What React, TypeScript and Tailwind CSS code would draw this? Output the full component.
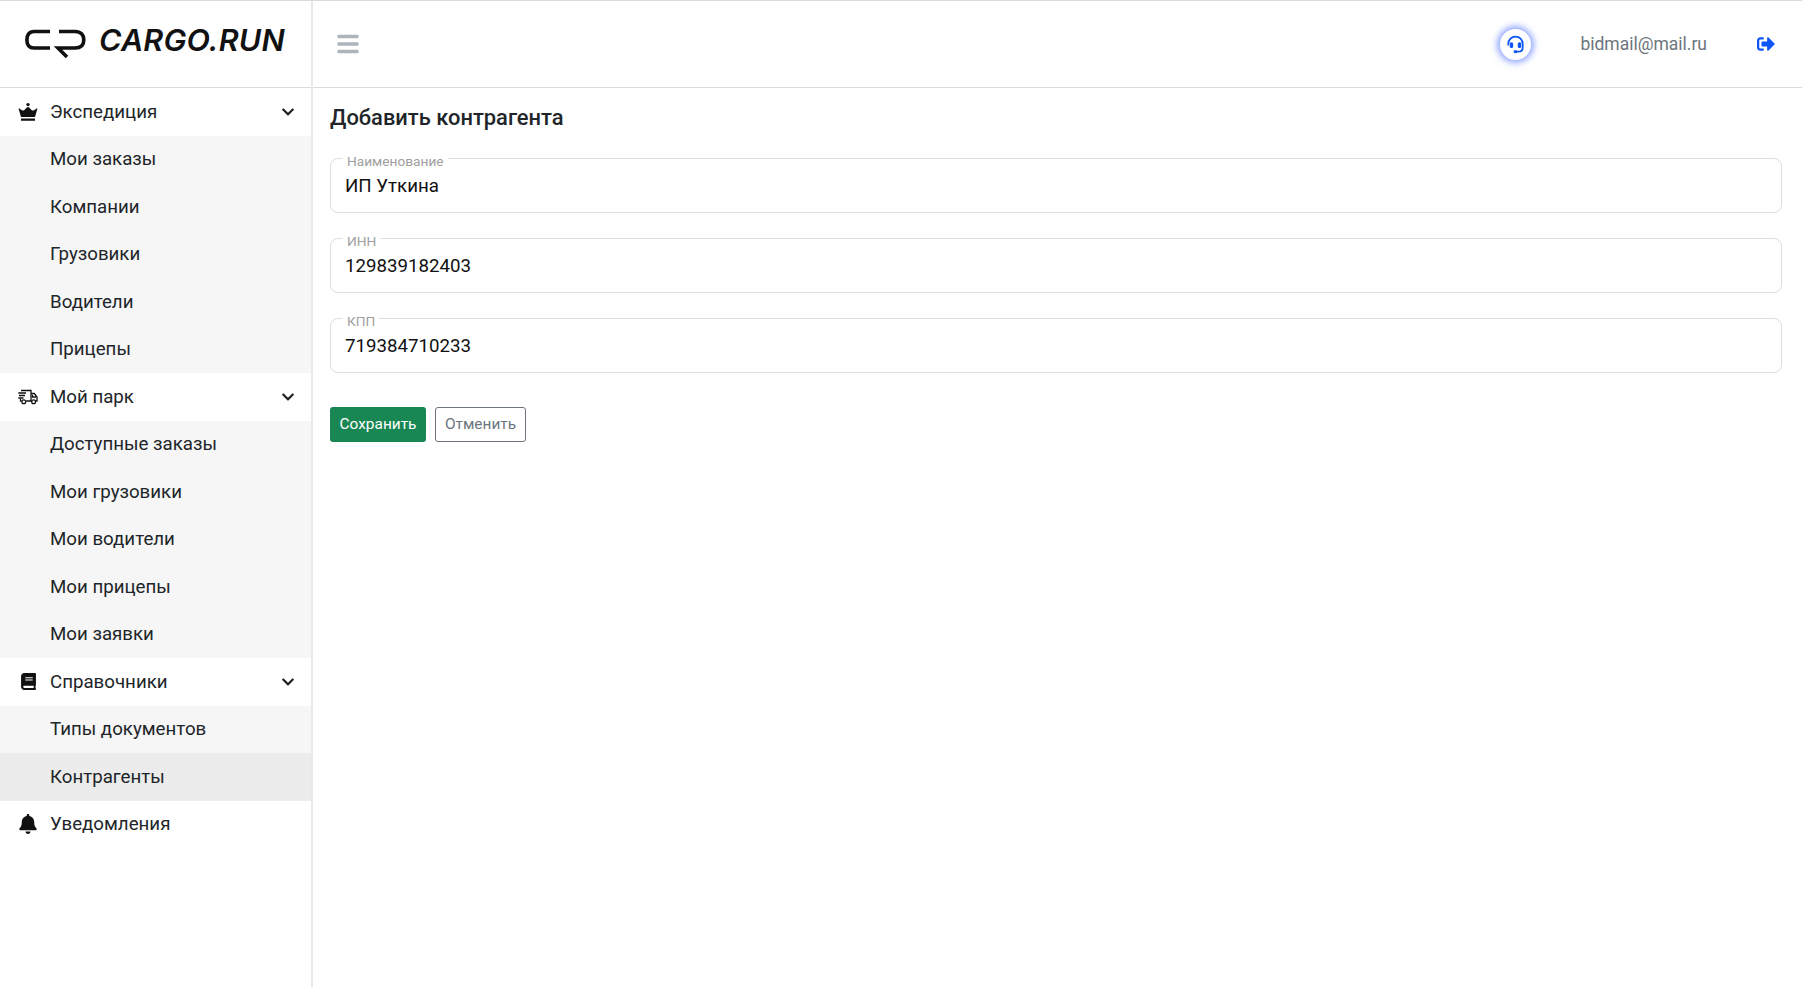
import { FaBars, FaBell, FaBook, FaChevronDown, FaSignOutAlt } from 'react-icons/fa';

const CrownIcon = () => (
    <svg width="20" height="20" viewBox="0 0 20 20" fill="currentColor">
        <circle cx="10" cy="2.6" r="1.7" />
        <path d="M0.5 6.2 C2.2 6 3.2 8.6 5 8.6 C7 8.6 8.2 5 10 5 C11.8 5 13 8.6 15 8.6 C16.8 8.6 17.8 6 19.5 6.2 L17 15 H3 Z" />
        <rect x="3" y="16.4" width="14" height="2.4" rx="0.4" />
    </svg>
);

const TruckIcon = () => (
    <svg width="20" height="16" viewBox="0 0 20 16" fill="none" stroke="currentColor" strokeWidth="1.3">
        <path d="M3 1.5 H13 V12 H8.2 M3.5 12 H2.5 V10" />
        <path d="M13 4.5 H16.3 L19 8 V12 H17.5 M13 12 H13.8" />
        <path d="M14.5 5.8 V8 H18" />
        <path d="M0.3 4 H8 M1 6.5 H7 M0.3 9 H5.5" />
        <circle cx="5.8" cy="12.8" r="1.9" />
        <circle cx="15.6" cy="12.8" r="1.9" />
    </svg>
);

const HeadsetIcon = () => (
    <svg width="19" height="19" viewBox="0 0 18 18" fill="none" stroke="#0d55f5" strokeWidth="1.7">
        <path d="M2.2 10 V8.4 C2.2 4.4 5.2 1.6 9 1.6 C12.8 1.6 15.8 4.4 15.8 8.4 V12 C15.8 14.4 14 15.8 11.5 15.8 H9.5" />
        <rect x="3.6" y="6.8" width="3.2" height="5.6" rx="1.5" fill="#0d55f5" stroke="none" />
        <rect x="11.2" y="6.8" width="3.2" height="5.6" rx="1.5" fill="#0d55f5" stroke="none" />
        <rect x="7.2" y="14.4" width="3.4" height="2.8" rx="1.3" fill="#0d55f5" stroke="none" />
    </svg>
);

const LogoMark = () => (
    <svg width="61" height="30" viewBox="0 0 61 30" fill="none" stroke="#111" strokeWidth="3.6">
        <path d="M25 2.5 H9 C4 2.5 1.9 6 1.9 11 C1.9 16 4 19 9 19 H25" />
        <path d="M34 2.5 H50 C56 2.5 58.8 6 58.8 11 C58.8 16 56 19 50 19 H33 L42 28" />
    </svg>
);

const menu = [
    { title: 'Экспедиция', icon: <CrownIcon />, items: ['Мои заказы', 'Компании', 'Грузовики', 'Водители', 'Прицепы'] },
    { title: 'Мой парк', icon: <TruckIcon />, items: ['Доступные заказы', 'Мои грузовики', 'Мои водители', 'Мои прицепы', 'Мои заявки'] },
    { title: 'Справочники', icon: <FaBook size={17} />, items: ['Типы документов', 'Контрагенты'] },
];

const fields = [
    { label: 'Наименование', value: 'ИП Уткина' },
    { label: 'ИНН', value: '129839182403' },
    { label: 'КПП', value: '719384710233' },
];

const App = () => {
    return (
        <div className="flex h-[987px] flex-col overflow-hidden border-t border-[#dcdcdc] bg-white font-['Roboto',sans-serif] text-[#212529]">
            <div className="flex min-h-0 flex-1">
                <aside className="flex w-[313px] shrink-0 flex-col border-r-2 border-[#e9e9e9]">
                    <div className="flex h-[87px] shrink-0 items-center gap-[13px] border-b border-[#dcdcdc] pl-[25px]">
                        <LogoMark />
                        <span className="pb-[8px] font-['Inter',sans-serif] text-[30.5px] font-semibold italic tracking-[0.2px] text-[#111]">CARGO.RUN</span>
                    </div>
                    <nav className="text-[18.7px]">
                        {menu.map((group) => (
                            <div key={group.title}>
                                <div className="flex h-[47.5px] items-center pl-[18px] pr-[16px]">
                                    <span className="flex w-[20px] justify-center text-[#111]">{group.icon}</span>
                                    <span className="ml-[12px] flex-1">{group.title}</span>
                                    <FaChevronDown size={14} className="text-[#222]" />
                                </div>
                                {group.items.map((item) => (
                                    <div
                                        key={item}
                                        className={`flex h-[47.5px] items-center pl-[50px] ${item === 'Контрагенты' ? 'bg-[#ececec]' : 'bg-[#f6f6f6]'}`}
                                    >
                                        {item}
                                    </div>
                                ))}
                            </div>
                        ))}
                        <div className="flex h-[47.5px] items-center pl-[18px]">
                            <span className="flex w-[20px] justify-center text-[#111]"><FaBell size={20} /></span>
                            <span className="ml-[12px]">Уведомления</span>
                        </div>
                    </nav>
                </aside>
                <div className="flex min-w-0 flex-1 flex-col">
                    <header className="flex h-[87px] shrink-0 items-center border-b border-[#dcdcdc] pl-[23px] pr-[27px]">
                        <FaBars size={24} className="text-[#adb5bd]" />
                        <div className="ml-auto flex items-center">
                            <div className="flex h-[31px] w-[31px] items-center justify-center rounded-full bg-white shadow-[0_0_6px_3px_rgba(60,100,255,0.55)]">
                                <HeadsetIcon />
                            </div>
                            <span className="ml-[49px] text-[17.5px] text-[#6c757d]">bidmail@mail.ru</span>
                            <FaSignOutAlt size={18} className="ml-[50px] text-[#0d55f5]" />
                        </div>
                    </header>
                    <main className="pl-[17px] pr-[20px] pt-[16px]">
                        <h1 className="text-[21.9px] font-medium leading-[28px]">Добавить контрагента</h1>
                        <div className="mt-[26px] flex flex-col gap-[25px]">
                            {fields.map((field) => (
                                <div key={field.label} className="relative h-[55px] rounded-[8px] border border-[#dedede] pl-[14px] pt-[14px] text-[18.7px] leading-[27px] text-[#111]">
                                    <span className="absolute left-[12px] top-[-6px] bg-white px-[4px] text-[13.7px] leading-[16px] text-[#a0a0a0]">{field.label}</span>
                                    {field.value}
                                </div>
                            ))}
                        </div>
                        <div className="mt-[34px] flex gap-[9px] text-[15.4px]">
                            <button className="h-[35px] w-[96px] rounded-[3px] bg-[#198754] text-white">Сохранить</button>
                            <button className="h-[35px] w-[91px] rounded-[3px] border border-[#6c757d] text-[#6c757d]">Отменить</button>
                        </div>
                    </main>
                </div>
            </div>
        </div>
    );
};

export default App;
